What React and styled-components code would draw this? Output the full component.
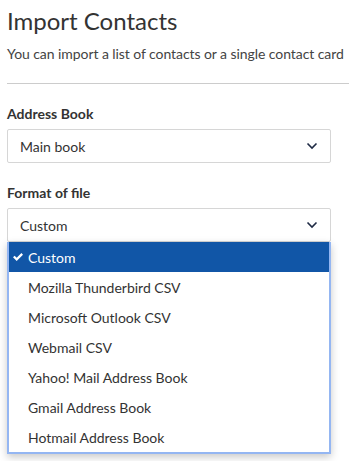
import React from "react";
import styled, { createGlobalStyle } from "styled-components";

const Global = createGlobalStyle`
  html, body { margin: 0; padding: 0; background: #fff; }
  body { font-family: Lato, "Open Sans", sans-serif; color: #333; }
`;

const Page = styled.div`
  padding: 6px 0 8px 7px;
  min-height: 461px;
  box-sizing: border-box;
`;

const Title = styled.h1`
  margin: 0;
  font-size: 24px;
  font-weight: 400;
  line-height: 29px;
  color: #333;
`;

const Subtitle = styled.p`
  margin: 10px 0 0;
  font-size: 14px;
  line-height: 17px;
  color: #444;
  white-space: nowrap;
  letter-spacing: -0.07px;
`;

const Divider = styled.hr`
  margin: 21px 0 0;
  border: 0;
  border-top: 1px solid #ccc;
`;

const Field = styled.div`
  margin-top: ${(p) => p.$top}px;
  width: 324px;
`;

const Label = styled.div`
  font-size: 14px;
  font-weight: 700;
  line-height: 17px;
  color: #333;
  margin-bottom: 7px;
`;

const SelectBox = styled.div`
  height: 34px;
  box-sizing: border-box;
  border: 1px solid #d6d6d6;
  border-radius: 2px;
  display: flex;
  align-items: center;
  justify-content: space-between;
  padding: 0 12px 0 12px;
  font-size: 14px;
  color: #333;
  background: #fff;
`;

const Menu = styled.ul`
  margin: 0;
  padding: 0;
  list-style: none;
  background: #fff;
  border: 2px solid #94b6f2;
  border-top: 0;
  box-shadow: 0 3px 8px rgba(0, 0, 0, 0.22);
`;

const Item = styled.li`
  height: 30px;
  display: flex;
  align-items: center;
  padding-left: 19px;
  font-size: 14px;
  color: ${(p) => (p.$active ? "#fff" : "#333")};
  background: ${(p) => (p.$active ? "#1156a7" : "transparent")};
  position: relative;
`;

const Check = styled.svg`
  position: absolute;
  left: 4px;
  top: 11px;
`;

const Chevron = () => (
  <svg width="12" height="8" viewBox="0 0 12 8">
    <path d="M1.5 1.5 L6 6 L10.5 1.5" fill="none" stroke="#1e2a44" strokeWidth="1.6" />
  </svg>
);

const options = [
  "Custom",
  "Mozilla Thunderbird CSV",
  "Microsoft Outlook CSV",
  "Webmail CSV",
  "Yahoo! Mail Address Book",
  "Gmail Address Book",
  "Hotmail Address Book",
];

export default function App() {
  return (
    <>
      <Global />
      <Page>
        <Title>Import Contacts</Title>
        <Subtitle>You can import a list of contacts or a single contact card</Subtitle>
        <Divider />
        <Field $top={21}>
          <Label>Address Book</Label>
          <SelectBox>
            <span>Main book</span>
            <Chevron />
          </SelectBox>
        </Field>
        <Field $top={21}>
          <Label>Format of file</Label>
          <SelectBox>
            <span>Custom</span>
            <Chevron />
          </SelectBox>
          <Menu role="listbox">
            {options.map((o, i) => (
              <Item key={o} $active={i === 0} role="option" aria-selected={i === 0}>
                {i === 0 && (
                  <Check width="10" height="8" viewBox="0 0 10 8">
                    <path d="M0 4.3 L1.6 2.7 L3.7 4.8 L8.4 0.1 L10 1.7 L3.7 8 Z" fill="#fff" />
                  </Check>
                )}
                {o}
              </Item>
            ))}
          </Menu>
        </Field>
      </Page>
    </>
  );
}
